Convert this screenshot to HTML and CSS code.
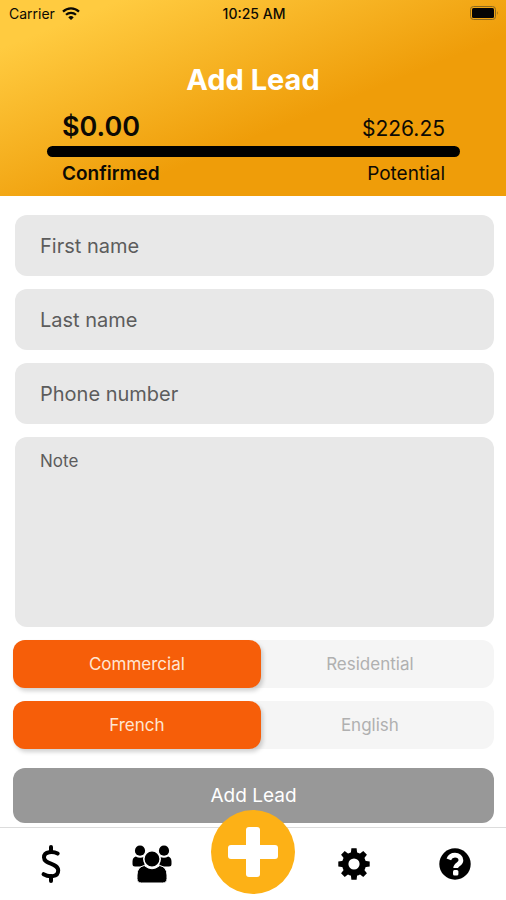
FILE: index.html
```html
<!DOCTYPE html>
<html lang="en">
<head>
<meta charset="utf-8">
<meta name="viewport" content="width=device-width, initial-scale=1">
<title>Add Lead</title>
<link rel="stylesheet" href="styles.css">
</head>
<body>
<div class="app">
  <header class="header">
    <div class="status">
      <div class="status-left">
        <span>Carrier</span>
        <svg class="wifi" viewBox="0 0 18 13" aria-hidden="true">
          <path d="M1 4.6a11.5 11.5 0 0 1 16 0M4 7.8a7.2 7.2 0 0 1 10 0" fill="none" stroke="#0c0a04" stroke-width="2.2"/>
          <path d="M9 13 6.3 10.4a3.9 3.9 0 0 1 5.4 0z" fill="#0c0a04"/>
        </svg>
      </div>
      <span class="clock">10:25 AM</span>
      <div class="status-right">
        <svg class="battery" viewBox="0 0 29 14" aria-hidden="true">
          <rect x="0.5" y="0.5" width="25" height="13" rx="3" fill="none" stroke="#8a6a20" stroke-width="1"/>
          <rect x="2" y="2" width="22" height="10" rx="1.5" fill="#050505"/>
          <path d="M27 5q1.600 2 0 4z" fill="#8a6a20"/>
        </svg>
      </div>
    </div>
    <h1 class="title">Add Lead</h1>
    <div class="totals">
      <div class="row amounts">
        <span class="confirmed-amount">$0.00</span>
        <span class="potential-amount">$226.25</span>
      </div>
      <div class="bar"></div>
      <div class="row captions">
        <span class="confirmed-label">Confirmed</span>
        <span>Potential</span>
      </div>
    </div>
  </header>

  <form class="form">
    <input class="field" type="text" placeholder="First name" aria-label="First name">
    <input class="field" type="text" placeholder="Last name" aria-label="Last name">
    <input class="field" type="tel" placeholder="Phone number" aria-label="Phone number">
    <textarea class="field note" placeholder="Note" aria-label="Note"></textarea>
    <div class="segment" role="radiogroup" aria-label="Property type">
      <label class="option"><input type="radio" name="property" checked><span>Commercial</span></label>
      <label class="option"><input type="radio" name="property"><span>Residential</span></label>
    </div>
    <div class="segment" role="radiogroup" aria-label="Language">
      <label class="option"><input type="radio" name="language" checked><span>French</span></label>
      <label class="option"><input type="radio" name="language"><span>English</span></label>
    </div>
    <button class="submit" type="submit">Add Lead</button>
  </form>

  <nav class="tabs">
    <a class="tab" href="#earnings" aria-label="Earnings">
      <svg width="20" height="38" viewBox="0 0 20 38" aria-hidden="true">
        <path d="M10 2V7M10 31V36" stroke="#000" stroke-width="4" stroke-linecap="round"/>
        <path d="M16.6 8.600C12.500 6.400 3 6 3 12.400 3 19.600 17.200 17.600 17.200 25.400 17.200 32.600 7.500 32.200 2.600 29.200" fill="none" stroke="#000" stroke-width="4" stroke-linecap="round"/>
      </svg>
    </a>
    <a class="tab" href="#leads" aria-label="Leads">
      <svg width="40" height="38" viewBox="0 0 40 38" aria-hidden="true">
        <circle cx="8" cy="5.700" r="5.100"/>
        <circle cx="32" cy="5.700" r="5.100"/>
        <path d="M3.800 11.500Q8 14.200 12.500 11.500V21.500H3Q.5 21.500.5 19v-2.500q0-4 3.300-5zM36.200 11.500Q32 14.200 27.500 11.500V21.500H37q2.500 0 2.500-2.500v-2.500q0-4-3.300-5z"/>
        <circle cx="20" cy="14" r="8.200" stroke="#fff" stroke-width="1.600"/>
        <path d="M12.200 20.500q7.800 6.500 15.600 0 7.200 1.500 7.200 9.500v3.500q0 4.500-4.500 4.500h-21Q5 38 5 33.500V30q0-8 7.200-9.500z" stroke="#fff" stroke-width="1"/>
      </svg>
    </a>
    <a class="tab" href="#add" aria-label="Add lead">
      <span class="add">
        <svg width="50" height="50" viewBox="0 0 50 50" aria-hidden="true">
          <rect x="18" y="0" width="14" height="50" rx="3" fill="#fff"/>
          <rect x="0" y="18" width="50" height="14" rx="3" fill="#fff"/>
        </svg>
      </span>
    </a>
    <a class="tab" href="#settings" aria-label="Settings">
      <svg width="32" height="32" viewBox="-16 -16 32 32" aria-hidden="true">
        <circle r="8.800" fill="none" stroke="#000" stroke-width="6.400"/>
        <path id="teeth" d="M-3.200-10.500-2.600-15.700H2.600L3.200-10.500zM-3.200 10.500-2.600 15.700H2.600L3.200 10.500zM-10.500-3.200-15.700-2.600V2.600L-10.500 3.200zM10.500-3.200 15.700-2.600V2.600L10.500 3.200z"/>
        <use href="#teeth" transform="rotate(45)"/>
      </svg>
    </a>
    <a class="tab" href="#help" aria-label="Help">
      <svg width="32" height="32" viewBox="0 0 32 32" aria-hidden="true">
        <circle cx="16" cy="16" r="15.700"/>
        <path d="M9.800 11.400C11 8.200 13.400 7.200 16 7.200c3.300 0 5.900 1.900 5.900 5 0 4.200-5.200 4-5.200 7.700" fill="none" stroke="#fff" stroke-width="4.800"/>
        <rect x="14" y="22" width="5.400" height="5.400" rx="1.500" fill="#fff"/>
      </svg>
    </a>
  </nav>
</div>
</body>
</html>
```
FILE: styles.css
```css
* {
  box-sizing: border-box;
}

body {
  margin: 0;
  background: #fff;
  color: #0c0a04;
  font-family: Inter, "Liberation Sans", sans-serif;
}

.app {
  display: flex;
  flex-direction: column;
  min-height: 100vh;
}

.header {
  padding-bottom: 10px;
  background: linear-gradient(158deg, #ffcb40 12%, #ef9d09 60%);
}

.status {
  display: grid;
  grid-template-columns: 1fr auto 1fr;
  align-items: center;
  height: 26px;
  padding: 0 7px 0 9px;
  font-size: 14px;
}

.status-left {
  display: flex;
  align-items: center;
  gap: 7px;
}

.status-right {
  display: flex;
  justify-content: flex-end;
}

.wifi {
  width: 18px;
  height: 13px;
}

.battery {
  width: 29px;
  height: 14px;
}

.clock {
  font-weight: 500;
}

.title {
  margin: 36px 0 13px;
  color: #fff;
  font-size: 29px;
  line-height: 36px;
  font-weight: 700;
  text-align: center;
}

.totals {
  margin: 0 46px 0 47px;
}

.row {
  display: flex;
  justify-content: space-between;
  align-items: baseline;
  padding: 0 15px;
}

.amounts {
  height: 35px;
  line-height: 32px;
}

.confirmed-amount {
  font-size: 27px;
  font-weight: 600;
}

.potential-amount {
  font-size: 21px;
}

.bar {
  height: 11px;
  border-radius: 6px;
  background: #000;
}

.captions {
  padding-top: 5px;
  font-size: 19px;
  line-height: 24px;
}

.confirmed-label {
  font-weight: 600;
}

.form {
  display: flex;
  flex-direction: column;
  flex: 1;
  gap: 13px;
  padding: 19px 12px 4px 13px;
}

.field {
  height: 61px;
  margin: 0 0 0 2px;
  padding: 0 25px;
  border: 0;
  border-radius: 12px;
  background: #e8e8e8;
  color: #333;
  font-family: inherit;
  font-size: 20px;
}

.field::placeholder {
  color: #5c5c5c;
  opacity: 1;
}

.note {
  flex: 1;
  min-height: 190px;
  padding-top: 12px;
  font-size: 17px;
  line-height: 24px;
  resize: none;
}

.segment {
  display: flex;
  border-radius: 12px;
  background: #f5f5f5;
}

.option {
  position: relative;
  flex: 1;
  color: #b0b0b0;
  font-size: 17px;
  line-height: 48px;
  text-align: center;
}

.option:first-child {
  flex: none;
  width: 51.5%;
}

.option input {
  position: absolute;
  inset: 0;
  margin: 0;
  opacity: 0;
}

.option span {
  display: block;
  border-radius: 12px;
}

.option input:checked + span {
  background: #f65e09;
  box-shadow: 2px 3px 4px rgba(0, 0, 0, 0.18);
  color: #ffe6d2;
}

.option:last-child {
  padding-right: 15px;
}

.submit {
  height: 55px;
  margin: 6px 0 0;
  padding: 0;
  border: 0;
  border-radius: 12px;
  background: #989898;
  color: #fff;
  font-family: inherit;
  font-size: 19px;
}

.tabs {
  display: flex;
  height: 73px;
  border-top: 1px solid #dcdcdc;
}

.tab {
  position: relative;
  display: flex;
  flex: 1;
  align-items: center;
  justify-content: center;
}

.add {
  position: absolute;
  top: -18px;
  display: flex;
  align-items: center;
  justify-content: center;
  width: 84px;
  height: 84px;
  border-radius: 50%;
  background: #fdb116;
}
```
